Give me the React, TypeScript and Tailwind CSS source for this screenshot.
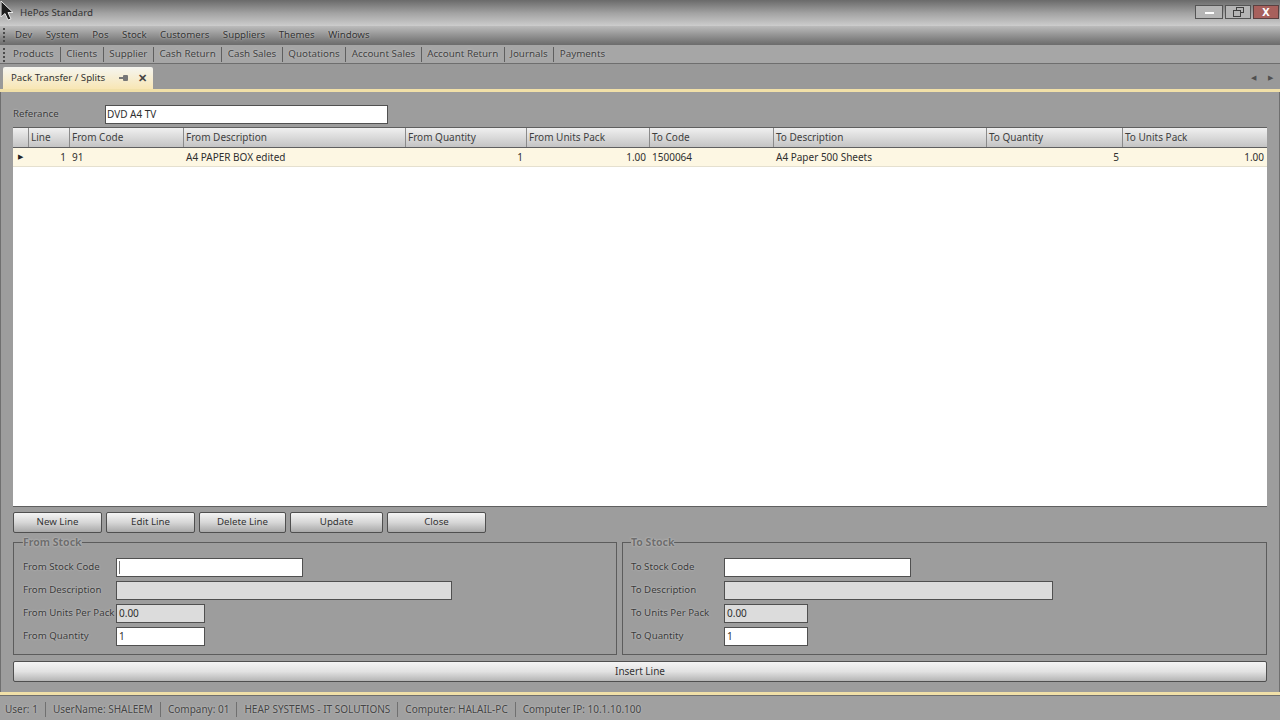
const font = { fontFamily: '"Noto Sans", sans-serif' };

const menus = ['Dev', 'System', 'Pos', 'Stock', 'Customers', 'Suppliers', 'Themes', 'Windows'];
const tools = ['Products', 'Clients', 'Supplier', 'Cash Return', 'Cash Sales', 'Quotations', 'Account Sales', 'Account Return', 'Journals', 'Payments'];
const status = ['User: 1', 'UserName: SHALEEM', 'Company: 01', 'HEAP SYSTEMS - IT SOLUTIONS', 'Computer: HALAIL-PC', 'Computer IP: 10.1.10.100'];

const columns = [
  { title: 'Line', value: '1', right: true },
  { title: 'From Code', value: '91' },
  { title: 'From Description', value: 'A4 PAPER BOX edited' },
  { title: 'From Quantity', value: '1', right: true },
  { title: 'From Units Pack', value: '1.00', right: true },
  { title: 'To Code', value: '1500064' },
  { title: 'To Description', value: 'A4 Paper 500 Sheets' },
  { title: 'To Quantity', value: '5', right: true },
  { title: 'To Units Pack', value: '1.00', right: true },
];

const gridCols = 'grid grid-cols-[15px_41px_114px_222px_121px_123px_124px_213px_136px_1fr]';
const halo = '[text-shadow:0_0_2px_#cfcfcf]';

function Grip() {
  return <div className="w-[3px] h-[14px] mr-1 shrink-0 border-l-2 border-dotted border-[#4a4a4a]" />;
}

function ActionButton({ label, className }: { label: string; className: string }) {
  return (
    <button className={`h-[21px] rounded-[2px] border border-[#4f4f4f] bg-gradient-to-b from-[#f4f4f4] via-[#d6d6d6] to-[#a9a9a9] text-[9.7px] text-[#333333] ${className}`}>
      {label}
    </button>
  );
}

function Field({ label, value, width, disabled, caret }: { label: string; value?: string; width: string; disabled?: boolean; caret?: boolean }) {
  return (
    <div className="flex items-center h-[19px]">
      <div className={`w-[93px] shrink-0 text-[9.7px] text-[#3a3a3a] whitespace-nowrap ${halo}`}>{label}</div>
      <div className={`h-[19px] border border-[#505050] px-[2px] flex items-center text-[10px] text-[#2f2f2f] ${disabled ? 'bg-[#dcdcdc]' : 'bg-white'} ${width}`}>
        {caret && <div className="w-px h-[13px] bg-[#777777]" />}
        {value}
      </div>
    </div>
  );
}

function StockGroup({ title, prefix, descWidth, unitWidth, caret, className }: { title: string; prefix: string; descWidth: string; unitWidth: string; caret?: boolean; className: string }) {
  return (
    <fieldset className={`border border-[#5c5c5c] h-[119px] ${className}`}>
      <legend className={`text-[10.5px] font-bold text-[#6e6e6e] leading-[12px] ${halo}`}>{title}</legend>
      <div className="flex flex-col gap-[4px] pt-[10px]">
        <Field label={`${prefix} Stock Code`} width="w-[187px]" caret={caret} />
        <Field label={`${prefix} Description`} width={descWidth} disabled />
        <Field label={`${prefix} Units Per Pack`} value="0.00" width={unitWidth} disabled />
        <Field label={`${prefix} Quantity`} value="1" width={unitWidth} />
      </div>
    </fieldset>
  );
}

export default function App() {
  return (
    <div className="relative w-[1280px] h-[720px] overflow-hidden flex flex-col bg-[#9d9d9d] text-[#3a3a3a]" style={font}>
      {/* title bar */}
      <div className="h-[26px] shrink-0 flex items-center pl-[20px] pr-[1px] bg-gradient-to-b from-[#6a6a6a] via-[#a2a2a2] to-[#cdcdcd]">
        <span className="text-[9.7px] text-[#333333]">HePos Standard</span>
        <div className="ml-auto flex gap-[2px] -mt-[3px]">
          <div className="w-[28px] h-[14px] border border-[#555555] bg-[#b5b5b5] flex items-center justify-center">
            <div className="w-[9px] h-[2px] bg-white mt-[3px]" />
          </div>
          <div className="w-[26px] h-[14px] border border-[#555555] bg-[#b5b5b5] flex items-center justify-center">
            <svg width="12" height="10" viewBox="0 0 12 10" fill="none" stroke="#3f3f3f" strokeWidth="1">
              <rect x="4.5" y="0.5" width="7" height="5" />
              <rect x="1.5" y="3.5" width="7" height="6" fill="#b5b5b5" />
            </svg>
          </div>
          <div className="w-[26px] h-[14px] border border-[#5a4040] bg-[#a8605c] flex items-center justify-center text-[11px] font-bold text-white leading-none">X</div>
        </div>
      </div>

      {/* menu */}
      <div className="h-[18px] shrink-0 flex items-center pl-[3px] bg-gradient-to-b from-[#bcbcbc] to-[#6f6f6f]">
        <Grip />
        <div className={`flex gap-[13.5px] pl-[5px] text-[9.7px] text-[#333333] ${halo}`}>
          {menus.map(m => <span key={m}>{m}</span>)}
        </div>
      </div>

      {/* toolbar */}
      <div className="h-[20px] shrink-0 flex items-center pl-[3px] pt-[1px] bg-[#a6a6a6] border-y border-[#6e6e6e]">
        <Grip />
        <div className={`flex pl-[3px] text-[9.8px] text-[#3f3f3f] ${halo}`}>
          {tools.map((t, i) => (
            <span key={t} className={i === 0 ? 'pr-[6px]' : 'px-[5.5px] border-l border-[#5f5f5f]'}>{t}</span>
          ))}
        </div>
      </div>

      {/* tab strip */}
      <div className="h-[25px] shrink-0 flex items-end pl-[3px] pr-[7px] bg-[#999999]">
        <div className="h-[22px] w-[150px] flex items-center pl-[8px] pr-[6px] rounded-t-[2px] bg-gradient-to-b from-[#f5f5f0] to-[#f8e6b4] text-[9.7px] text-[#333333]">
          <span>Pack Transfer / Splits</span>
          <svg className="ml-auto" width="10" height="8" viewBox="0 0 10 8" fill="#777777">
            <rect x="4" y="1" width="5" height="6" rx="1" />
            <rect x="0" y="3" width="5" height="2" />
          </svg>
          <span className="ml-[9px] text-[11px] font-bold text-[#444444]">✕</span>
        </div>
        <div className="ml-auto flex gap-[12px] pb-[6px] text-[7px] text-[#505050]">
          <span>◀</span>
          <span>▶</span>
        </div>
      </div>
      <div className="h-[3px] shrink-0 bg-[#f1e0a8]" />

      {/* document */}
      <div className="flex-1 min-h-0 flex flex-col px-[12px] border-x border-[#6f6f6f]">
        <div className="h-[35px] shrink-0 flex items-center pt-[9px]">
          <span className={`w-[92px] text-[9.7px] text-[#3a3a3a] ${halo}`}>Referance</span>
          <div className="w-[283px] h-[19px] bg-white border border-[#505050] px-[1px] flex items-center text-[10px] text-[#2f2f2f]">DVD A4 TV</div>
        </div>

        <div className="h-[380px] shrink-0 flex flex-col bg-white border-y border-[#5f5f5f]">
          <div className={`${gridCols} h-[20px] shrink-0 bg-gradient-to-b from-[#f0f0f0] to-[#c4c4c4] border-b border-[#5f5f5f] text-[10px] text-[#3f3f3f]`}>
            <div />
            {columns.map(c => (
              <div key={c.title} className="border-l border-[#8a8a8a] pl-[2px] flex items-center">{c.title}</div>
            ))}
          </div>
          <div className={`${gridCols} h-[19px] shrink-0 bg-[#fdf7e3] border-b border-[#e5e0cf] text-[10px] text-[#2f2f2f]`}>
            <div className="flex items-center justify-center text-[7px] text-[#222222]">▶</div>
            {columns.map(c => (
              <div key={c.title} className={`flex items-center px-[3px] ${c.right ? 'justify-end' : ''}`}>{c.value}</div>
            ))}
          </div>
        </div>

        <div className="flex gap-[4px] mt-[5px] shrink-0">
          <ActionButton label="New Line" className="w-[89px]" />
          <ActionButton label="Edit Line" className="w-[89px]" />
          <ActionButton label="Delete Line" className="w-[87px]" />
          <ActionButton label="Update" className="w-[93px]" />
          <ActionButton label="Close" className="w-[99px]" />
        </div>

        <div className="flex gap-[5px] mt-[3px] shrink-0">
          <StockGroup title="From Stock" prefix="From" descWidth="w-[336px]" unitWidth="w-[89px]" caret className="w-[604px] pl-[9px]" />
          <StockGroup title="To Stock" prefix="To" descWidth="w-[329px]" unitWidth="w-[84px]" className="flex-1 pl-[8px]" />
        </div>

        <button className="mt-[6px] h-[21px] shrink-0 rounded-[2px] border border-[#4f4f4f] bg-gradient-to-b from-[#f4f4f4] via-[#e2e2e2] to-[#b5b5b5] text-[10px] text-[#333333]">
          Insert Line
        </button>
      </div>

      <div className="h-[3px] shrink-0 bg-[#f1e0a8]" />

      {/* status bar */}
      <div className={`h-[25px] shrink-0 flex items-center pl-[5px] pt-[3px] bg-[#a0a0a0] border-t border-[#6f6f6f] text-[10px] text-[#444444] ${halo}`}>
        {status.map((s, i) => (
          <span key={s} className={i === 0 ? 'pr-[7px]' : 'px-[7px] border-l border-[#707070]'}>{s}</span>
        ))}
      </div>

      {/* mouse pointer */}
      <svg className="absolute left-0 top-0" width="16" height="22" viewBox="0 0 16 22">
        <path d="M1 1 L1 17 L5 13.5 L8 20 L11 19 L8 12.5 L13 12.5 Z" fill="#1c1c1c" stroke="#e8e8e8" strokeWidth="1" />
      </svg>
    </div>
  );
}
